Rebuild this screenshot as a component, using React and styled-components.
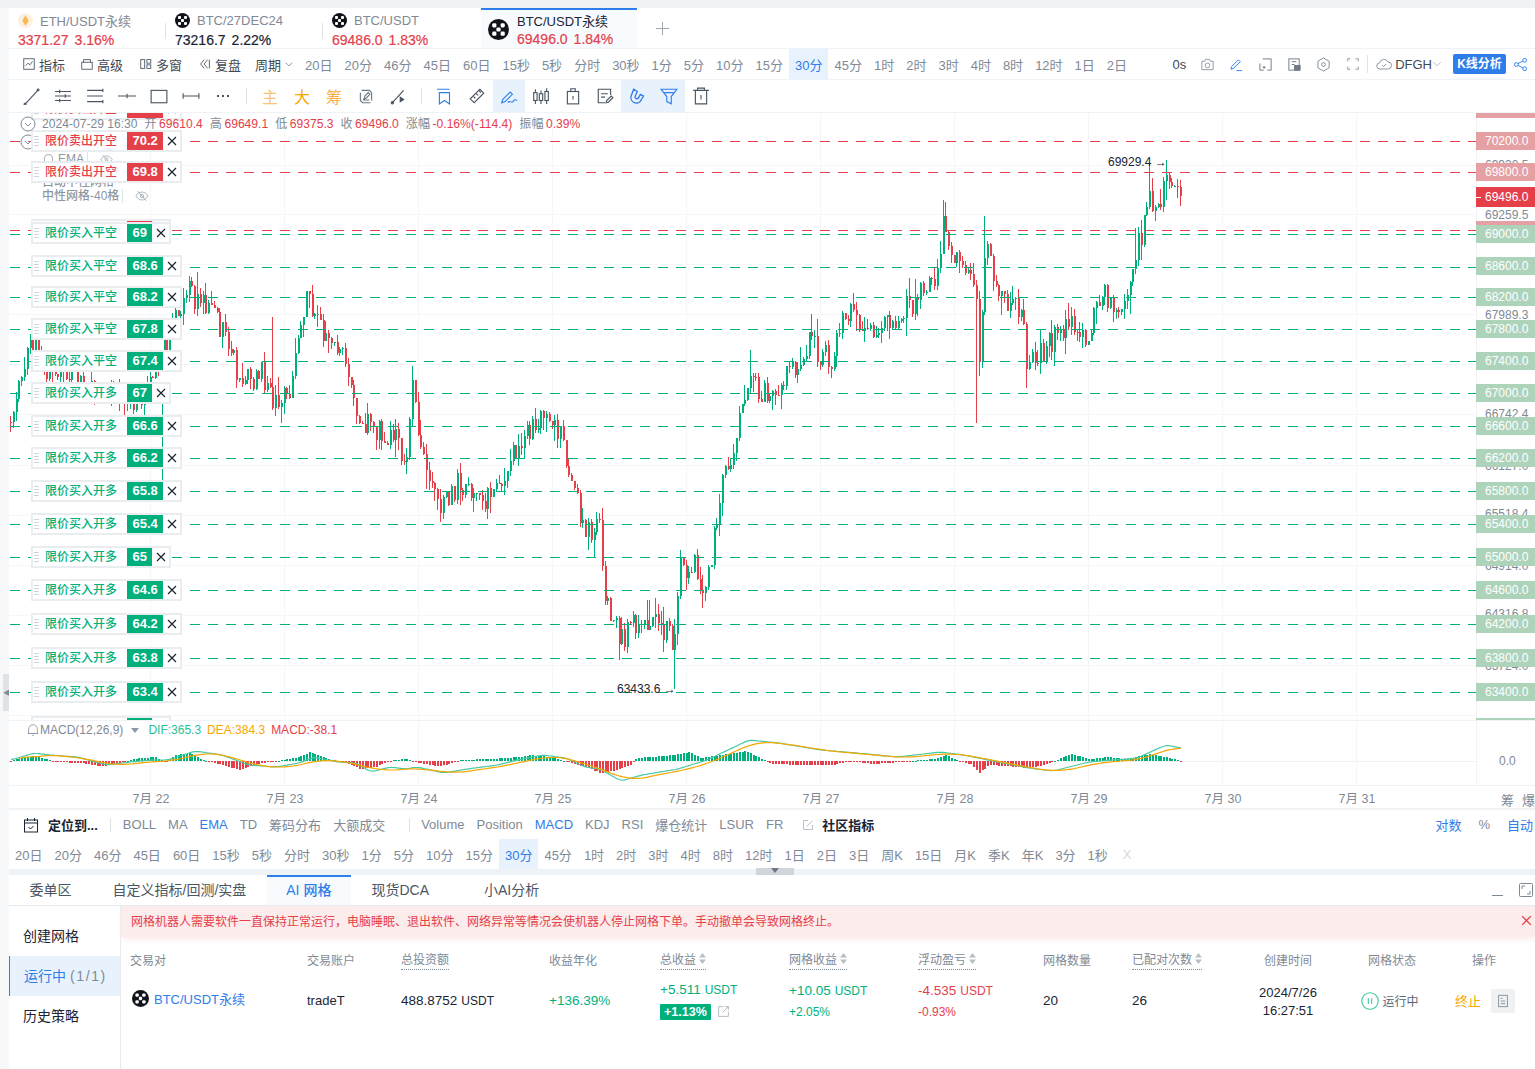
import styled, { createGlobalStyle } from "styled-components";

const GRAY = "#7f8a96";
const DARK = "#1a2433";
const RED = "#e5404a";
const GREEN = "#00b07c";
const BLUE = "#2f7de9";
const ORANGE = "#f7a600";
const LINE = "#eff3f6";

const GlobalStyle = createGlobalStyle`
    html, body { margin: 0; padding: 0; }
    body {
        font-family: "Liberation Sans", "Noto Sans CJK SC", sans-serif;
        font-size: 13px;
        color: ${DARK};
        overflow: hidden;
    }
`;

const Page = styled.div`
    position: relative;
    height: 1069px;
    overflow: hidden;
    padding: 8px 0 0 9px;
    box-sizing: border-box;
    background: linear-gradient(${LINE} 8px, #f6f8fa 8px);
    display: flex;
    flex-direction: column;
`;

const SideHandle = styled.div`
    position: absolute;
    left: 3px;
    top: 674px;
    width: 7px;
    height: 37px;
    background: #dfe3e6;
    color: #7f8a96;
    font-size: 7px;
    line-height: 37px;
`;

/* ---------- top tabs ---------- */
const TabBar = styled.div`
    display: flex;
    height: 40px;
    background: #fff;
    border-bottom: 1px solid ${LINE};
`;

const Tab = styled.div`
    position: relative;
    width: ${p => (p.$active ? "156px" : "157px")};
    margin-left: ${p => (p.$active ? "1px" : "0")};
    box-sizing: border-box;
    padding: ${p => (p.$active ? "3px 0 0 36px" : "5px 0 0 9px")};
    background: ${p => (p.$active ? "#f8fbfe" : "#fff")};
    border-top: ${p => (p.$active ? `2px solid ${BLUE}` : "none")};
    &::after {
        content: "";
        display: ${p => (p.$sep ? "block" : "none")};
        position: absolute;
        right: 0;
        top: 15px;
        height: 16px;
        border-right: 1px solid #dfe3e6;
    }
`;

const TabName = styled.div`
    display: flex;
    align-items: center;
    gap: 7px;
    height: 15px;
    font-size: 13px;
    color: ${p => (p.$active ? DARK : GRAY)};
`;

const TabPrice = styled.div`
    display: flex;
    gap: 6px;
    margin-top: ${p => (p.$active ? 3 : 4)}px;
    font-size: 14px;
    font-weight: 500;
    line-height: 16px;
    -webkit-text-stroke: 0.2px currentColor;
    color: ${p => (p.$tone === "dark" ? DARK : RED)};
`;

const BigCoin = styled.span`
    position: absolute;
    left: 7px;
    top: 9px;
    display: flex;
`;

const AddTab = styled.div`
    margin-left: 18px;
    align-self: center;
    display: flex;
    color: #9aa3ad;
`;

/* ---------- toolbars ---------- */
const Toolbar = styled.div`
    display: flex;
    align-items: center;
    height: 30px;
    background: #fff;
    border-bottom: 1px solid ${LINE};
`;

const Tool = styled.div`
    display: flex;
    align-items: center;
    gap: 3px;
    margin-left: ${p => p.$ml || 0}px;
    margin-right: ${p => p.$mr || 0}px;
    font-size: 13px;
    color: #3f4a57;
`;

const Period = styled.div`
    height: 100%;
    display: flex;
    align-items: center;
    padding: 0 6px;
    font-size: 13px;
    color: ${p => (p.$active ? BLUE : GRAY)};
    background: ${p => (p.$active ? "#e7f2fd" : "transparent")};
`;

const PeriodGroup = styled.div`
    display: flex;
    height: 100%;
    margin-left: ${p => p.$ml || 0}px;
`;

const RightTools = styled.div`
    margin-left: auto;
    display: flex;
    align-items: center;
    height: 100%;
    color: ${GRAY};
`;

const IconSlot = styled.span`
    width: 29px;
    display: flex;
    justify-content: center;
`;

const Divider = styled.span`
    width: 1px;
    height: ${p => p.$h || 16}px;
    margin-left: ${p => p.$ml || 0}px;
    margin-right: ${p => p.$mr || 0}px;
    background: #dfe3e6;
`;

const AnalyzeBtn = styled.div`
    width: 53px;
    height: 20px;
    border-radius: 2px;
    margin-left: 11px;
    background: ${BLUE};
    color: #fff;
    font-size: 12px;
    font-weight: 700;
    line-height: 20px;
    text-align: center;
`;

const DrawBar = styled.div`
    display: flex;
    align-items: center;
    height: 32px;
    padding-left: 6px;
    background: #fff;
    border-bottom: 1px solid ${LINE};
`;

const DrawTool = styled.span`
    width: 32px;
    height: 32px;
    display: flex;
    align-items: center;
    justify-content: center;
    background: ${p => (p.$active ? "#e7f2fd" : "transparent")};
`;

const DrawWord = styled(DrawTool)`
    font-size: 16px;
    color: ${p => p.$color};
`;

/* ---------- chart ---------- */
const MainPane = styled.div`
    position: relative;
    height: 607px;
    overflow: hidden;
    background: #fff;
`;

const MacdPane = styled.div`
    position: relative;
    height: 64px;
    background: #fff;
    border-top: 1px solid ${LINE};
    overflow: hidden;
`;

const CanvasSvg = styled.svg`
    position: absolute;
    left: 0;
    top: 0;
    display: block;
`;

const DateAxis = styled.div`
    position: relative;
    display: flex;
    height: 22px;
    padding-left: 75px;
    align-items: center;
    background: #fff;
    border-top: 1px solid ${LINE};
    border-bottom: 2px solid ${LINE};
`;

const DateCell = styled.div`
    width: 134px;
    text-align: center;
    font-size: 12.5px;
    color: ${GRAY};
`;

const AxisEnd = styled.div`
    position: absolute;
    right: 0;
    top: 4px;
    display: flex;
    gap: 8px;
    font-size: 13px;
    color: ${GRAY};
`;

const Legend = styled.div`
    position: absolute;
    left: 11px;
    top: 3px;
    display: flex;
    align-items: center;
    gap: 7px;
    height: 16px;
    font-size: 12.1px;
    color: ${GRAY};
    white-space: nowrap;
    z-index: 3;
`;

const LegendField = styled.span`
    display: inline-flex;
    align-items: baseline;
    gap: 2.5px;
    height: 16px;
    line-height: 16px;
    margin-left: ${p => p.$ml || 0}px;
`;

const Val = styled.span`
    color: ${RED};
`;

const RowToggle = styled.span`
    position: absolute;
    left: 11px;
    top: ${p => p.$y - 113 - 8}px;
    display: flex;
`;

const IndicatorName = styled.div`
    position: absolute;
    left: ${p => p.$x - 9}px;
    top: ${p => p.$y - 113 - 8}px;
    height: 16px;
    line-height: 16px;
    display: flex;
    align-items: center;
    gap: 3px;
    font-size: 12px;
    font-weight: 500;
    color: #8e98a3;
    white-space: nowrap;
`;

const NameSep = styled.span`
    width: 1px;
    height: 14px;
    margin-right: ${p => p.$mr}px;
    background: #dfe3e6;
`;

const Order = styled.div`
    position: absolute;
    left: 22px;
    top: ${p => p.$y - 113 - 11}px;
    height: 18px;
    display: flex;
    align-items: stretch;
    background: #fff;
    border: 2px solid #e9edef;
    z-index: 2;
`;

const Grip = styled.span`
    width: 11px;
    margin-left: 1px;
    display: flex;
    align-items: center;
`;

const OrderName = styled.span`
    width: 82px;
    font-size: 12px;
    line-height: 18px;
    font-weight: 500;
    color: ${p => (p.$side === "sell" ? RED : GREEN)};
`;

const OrderValue = styled.span`
    padding: 0 5.5px;
    font-size: 13px;
    font-weight: 700;
    line-height: 18px;
    color: #fff;
    background: ${p => (p.$side === "sell" ? RED : GREEN)};
`;

const OrderClose = styled.span`
    width: 17px;
    display: flex;
    align-items: center;
    justify-content: center;
`;

const PriceTag = styled.div`
    position: absolute;
    left: 1467px;
    top: ${p => p.$y - 113 - 9}px;
    width: 59px;
    height: 18px;
    box-sizing: border-box;
    padding-left: 9px;
    font-size: 12px;
    line-height: 18px;
    color: #fff;
    background: ${p => (p.$side === "sell" ? "#e5a0a4" : "#aed3bb")};
    z-index: 2;
`;

const LastPrice = styled(PriceTag)`
    height: 20px;
    line-height: 20px;
    background: ${RED};
    top: ${p => p.$y - 113 - 10}px;
    z-index: 3;
    &::before {
        content: "";
        position: absolute;
        left: 0;
        top: 10px;
        width: 5px;
        height: 1px;
        background: #fff;
    }
`;

const AxisPrice = styled.div`
    position: absolute;
    left: 1476px;
    top: ${p => p.$y - 113 - 7}px;
    font-size: 12px;
    line-height: 14px;
    color: ${GRAY};
`;

const Extreme = styled.div`
    position: absolute;
    left: ${p => p.$x - 9}px;
    top: ${p => p.$y - 113 - 7}px;
    font-size: 12px;
    line-height: 14px;
    color: ${DARK};
    white-space: nowrap;
`;

const MacdLegend = styled.div`
    position: absolute;
    left: 17px;
    top: 1px;
    display: flex;
    align-items: center;
    font-size: 12px;
    line-height: 16px;
    color: ${GRAY};
`;

const MacdValue = styled.span`
    margin-left: ${p => p.$ml || 6}px;
    color: ${p => p.$color};
`;

const MacdCaret = styled.svg`
    margin-left: 8px;
    fill: #8e98a3;
`;

const ZeroLabel = styled.div`
    position: absolute;
    left: 1490px;
    top: 33px;
    font-size: 12px;
    color: ${GRAY};
`;

/* ---------- indicator + period rows ---------- */
const IndicatorRow = styled.div`
    display: flex;
    align-items: center;
    gap: 12px;
    height: 29px;
    padding-left: 14px;
    background: #fff;
    font-size: 13px;
    color: ${GRAY};
    white-space: nowrap;
`;

const Chip = styled.span`
    color: ${p => (p.$on ? BLUE : GRAY)};
`;

const StrongChip = styled.span`
    font-weight: 700;
    color: ${DARK};
    margin-left: ${p => p.$ml || 0}px;
`;

const ExtSlot = styled.span`
    display: flex;
    margin-left: ${p => p.$ml || 0}px;
`;

const RowEnd = styled.div`
    margin-left: auto;
    margin-right: 2px;
    display: flex;
    align-items: center;
    gap: 17px;
`;

const PeriodRow = styled.div`
    display: flex;
    height: 30px;
    background: #fff;
`;

const RowClose = styled.span`
    display: flex;
    align-items: center;
    margin-left: 9px;
    font-size: 13px;
    color: #d3d8dd;
`;

const Gap = styled.div`
    position: relative;
    height: 6px;
    background: ${LINE};
`;

const GapHandle = styled.div`
    position: absolute;
    left: 747px;
    top: -1px;
    width: 38px;
    height: 7px;
    display: flex;
    justify-content: center;
    background: #cfd5da;
`;

/* ---------- bottom panel ---------- */
const Panel = styled.div`
    flex: 1;
    display: flex;
    flex-direction: column;
    background: #fff;
`;

const PanelTabs = styled.div`
    display: flex;
    align-items: stretch;
    height: 30px;
    border-bottom: 1px solid #e6eaed;
`;

const PanelTab = styled.div`
    padding: 0 ${p => (p.$active ? 19.5 : 20.5)}px;
    margin-left: ${p => p.$ml || 0}px;
    font-size: 14px;
    line-height: 26px;
    color: ${p => (p.$active ? BLUE : "#4a5562")};
    background: ${p => (p.$active ? "#f8fbfe" : "transparent")};
    border-top: 2px solid ${p => (p.$active ? BLUE : "transparent")};
    font-weight: ${p => (p.$active ? 500 : 400)};
`;

const WindowTools = styled.div`
    margin-left: auto;
    margin-right: 1px;
    display: flex;
    align-items: center;
    gap: 12px;
`;

const PanelBody = styled.div`
    flex: 1;
    display: flex;
`;

const SideMenu = styled.div`
    width: 111px;
    padding-top: 10px;
    border-right: 1px solid #e6eaed;
`;

const SideItem = styled.div`
    height: 40px;
    line-height: 40px;
    box-sizing: border-box;
    padding-left: ${p => (p.$active ? 15 : 14)}px;
    font-size: 14px;
    color: ${p => (p.$active ? BLUE : DARK)};
    background: ${p => (p.$active ? "#e7f2fd" : "transparent")};
    box-shadow: ${p => (p.$active ? `inset 1px 0 0 ${BLUE}` : "none")};
`;

const SideCount = styled.span`
    color: ${GRAY};
    margin-left: 4px;
    letter-spacing: 1.6px;
`;

const Content = styled.div`
    flex: 1;
    min-width: 0;
`;

const Banner = styled.div`
    display: flex;
    align-items: center;
    justify-content: space-between;
    height: 31px;
    box-sizing: border-box;
    padding: 0 3px 2px 10px;
    font-size: 12px;
    color: ${RED};
    background: #fdecec;
    box-shadow: 0 3px 5px #fdeeee;
`;

const COLS = "177px 94px 148px 111px 129px 129px 125px 89px 108px 96px 112px 72px";

const HeadRow = styled.div`
    display: grid;
    grid-template-columns: ${COLS};
    align-items: center;
    height: 23px;
    margin: 11px 0 0 9px;
    font-size: 12px;
    color: ${GRAY};
`;

const Head = styled.div`
    text-align: ${p => (p.$center ? "center" : "left")};
`;

const HeadText = styled.span`
    display: inline-flex;
    align-items: center;
    gap: 3px;
    padding-bottom: 2px;
    border-bottom: ${p => (p.$dotted ? `1px dotted ${GRAY}` : "none")};
`;

const DataRow = styled.div`
    display: grid;
    grid-template-columns: ${COLS};
    align-items: center;
    height: 59px;
    margin-left: 9px;
    font-size: 13px;
    color: ${DARK};
`;

const PairCell = styled.div`
    display: flex;
    align-items: center;
    gap: 5px;
    margin-left: 2px;
    color: ${BLUE};
    margin-top: -4px;
`;

const Amount = styled.span`
    font-size: 13.5px;
    color: ${p => p.$color || DARK};
`;

const Unit = styled.span`
    font-size: 12px;
    margin-left: 4px;
    color: ${p => p.$color || DARK};
`;

const Stack = styled.div`
    display: flex;
    flex-direction: column;
    gap: 7px;
`;

const SubPct = styled.span`
    font-size: 12px;
    color: ${p => p.$color};
`;

const Badge = styled.span`
    padding: 1px 4px;
    border-radius: 1px;
    font-size: 12.5px;
    line-height: 14px;
    font-weight: 700;
    color: #fff;
    background: ${GREEN};
`;

const BadgeLine = styled.div`
    display: flex;
    align-items: center;
    gap: 6px;
`;

const TimeCell = styled.div`
    text-align: center;
    line-height: 18px;
    margin-top: 2px;
`;

const StatusCell = styled.div`
    display: flex;
    align-items: center;
    justify-content: center;
    gap: 3px;
    padding-right: 4px;
    font-size: 12px;
    color: #5a6673;
`;

const ActionCell = styled.div`
    display: flex;
    align-items: center;
    gap: 10px;
    padding-left: 7px;
`;

const StopWord = styled.span`
    font-size: 13px;
    color: ${ORANGE};
`;

const LogBtn = styled.span`
    width: 24px;
    height: 24px;
    display: flex;
    align-items: center;
    justify-content: center;
    background: #eff1f3;
    border-radius: 2px;
`;

const Svg = styled.svg`
    display: block;
    flex: none;
    fill: none;
    stroke: ${p => p.$c || "#4a5562"};
    stroke-width: ${p => p.$w || 1};
`;

function Ico({ s = 16, c, w, children }) {
    return <Svg viewBox="0 0 16 16" width={s} height={s} $c={c} $w={w}>{children}</Svg>;
}

function OkxCoin({ s = 15 }) {
    return (
        <svg viewBox="0 0 20 20" width={s} height={s}>
            <circle cx="10" cy="10" r="10" fill="#10141a" />
            {[[4, 4], [12, 4], [8, 8], [4, 12], [12, 12]].map(([x, y]) => (
                <rect key={`${x}-${y}`} x={x} y={y} width="4" height="4" rx="1.3" fill="#fff" />
            ))}
        </svg>
    );
}

function EthCoin() {
    return (
        <svg viewBox="0 0 16 16" width="15" height="15">
            <circle cx="8" cy="8" r="8" fill="#fbf1e2" />
            <path d="M8 2.5 11.5 8 8 13.5 4.5 8z" fill="#f7b955" />
        </svg>
    );
}

function Cross({ s = 10, c = DARK }) {
    return (
        <svg viewBox="0 0 10 10" width={s} height={s} fill="none" stroke={c} strokeWidth="1.2">
            <path d="M1 1 9 9M9 1 1 9" />
        </svg>
    );
}

function GripDots() {
    return (
        <svg viewBox="0 0 5 10" width="5" height="10" fill="#cfd5da">
            {[0, 3, 6, 9].map(y => (
                <rect key={y} x="0" y={y} width="5" height="1" />
            ))}
        </svg>
    );
}

function SortIcon() {
    return (
        <svg viewBox="0 0 7 11" width="7" height="11" fill="#b7bec6">
            <path d="M3.5 0 7 4.5H0zM3.5 11 0 6.5h7z" />
        </svg>
    );
}

function ToggleCircle() {
    return (
        <Ico s={16} c="#7f8a96">
            <circle cx="8" cy="8" r="7" />
            <path d="M5 7l3 3 3-3" />
        </Ico>
    );
}

function EyeOff({ s = 14 }) {
    return (
        <Ico s={s} c="#a3acb5">
            <path d="M1 8c2-3.2 4.4-4.5 7-4.5S13 4.8 15 8c-2 3.2-4.4 4.5-7 4.5S3 11.2 1 8z" />
            <circle cx="8" cy="8" r="2" />
            <path d="M3 2.5 13 13.5" />
        </Ico>
    );
}

function Bell({ s = 14, c = "#8e98a3" }) {
    return (
        <Ico s={s} c={c}><path d="M3 12V7a5 5 0 0 1 10 0v5zM2 12h12M7 14h2" /></Ico>
    );
}

/* ---------- chart data ---------- */
const PATH = [
    [10, 422], [16, 400], [24, 360], [32, 345], [45, 372], [60, 378], [75, 375], [90, 392], [110, 392], [125, 400],
    [140, 398], [152, 380], [165, 345], [175, 320], [185, 285], [195, 300], [210, 315], [225, 335], [240, 385],
    [250, 380], [262, 372], [278, 415], [290, 385], [298, 340], [306, 300], [325, 340], [345, 358], [360, 425],
    [380, 428], [398, 440], [406, 470], [412, 385], [425, 478], [440, 510], [458, 482], [475, 505], [495, 488],
    [515, 445], [528, 432], [540, 415], [560, 430], [575, 500], [590, 540], [600, 512], [604, 600], [620, 640],
    [635, 620], [650, 625], [665, 630], [674, 640], [680, 570], [695, 560], [705, 600], [715, 530], [722, 480],
    [735, 455], [745, 380], [770, 395], [790, 372], [808, 340], [830, 362], [845, 312], [870, 332], [895, 322],
    [915, 298], [935, 285], [942, 225], [955, 255], [975, 280], [980, 370], [985, 232], [995, 292], [1020, 312],
    [1027, 368], [1045, 350], [1065, 322], [1085, 342], [1100, 295], [1125, 312], [1135, 250], [1143, 235],
    [1147, 190], [1152, 205], [1160, 195], [1167, 170], [1174, 190], [1181, 195],
];

const SPIKES = [
    [977, 423], [984, 216], [942, 200], [675, 689], [1150, 162], [1167, 160], [305, 293], [197, 272], [273, 317],
    [411, 366], [440, 522], [505, 470], [563, 420], [618, 660], [648, 600], [750, 350], [811, 314], [1027, 388],
    [1136, 228], [1180, 206], [588, 550], [702, 608],
];

const HIST = [
    [10, 0], [20, 3], [35, 5], [45, 2], [55, -1], [80, -2], [100, -5], [110, -4], [125, 0], [140, 3], [155, 4],
    [165, -1], [175, 6], [190, 8], [200, 2], [210, -1], [240, -9], [255, -3], [270, -1], [295, 3], [310, 9],
    [325, 3], [345, -2], [360, -8], [375, -6], [385, -1], [395, 1], [405, 2], [415, -1], [435, -5], [445, -4],
    [460, 1], [490, 2], [520, 4], [530, 6], [550, 4], [570, -2], [585, -6], [600, -12], [612, -10], [630, -4],
    [636, 3], [665, 5], [689, 9], [701, 3], [713, 5], [746, 10], [764, 1], [770, -3], [803, -4], [832, -4],
    [845, -1], [856, -1], [874, -3], [898, -1], [910, 0], [934, 2], [946, 6], [958, 0], [970, -3], [979, -12],
    [988, -4], [1005, -5], [1029, -7], [1047, -3], [1056, 1], [1071, 7], [1089, 2], [1107, 4], [1125, 2],
    [1149, 7], [1164, 4], [1178, 1], [1181, -1],
];

const DIF = [
    [11, 760], [34, 753], [50, 755], [77, 757], [107, 765], [130, 762], [153, 760], [168, 760], [195, 751],
    [222, 755], [249, 765], [276, 767], [299, 763], [314, 757], [337, 762], [356, 763], [371, 772], [390, 767],
    [406, 769], [417, 767], [444, 773], [467, 769], [498, 765], [517, 760], [543, 755], [566, 758], [585, 767],
    [600, 769], [621, 781], [642, 775], [678, 769], [707, 760], [749, 740], [779, 743], [821, 750], [856, 753],
    [898, 757], [940, 752], [964, 755], [988, 760], [1029, 768], [1053, 771], [1089, 762], [1137, 758],
    [1166, 745], [1181, 748],
];

const interp = (pts, x) => {
    if (x <= pts[0][0]) return pts[0][1];
    for (let i = 1; i < pts.length; i++) {
        if (x <= pts[i][0]) {
            const [x0, y0] = pts[i - 1];
            const [x1, y1] = pts[i];
            return y0 + ((y1 - y0) * (x - x0)) / (x1 - x0);
        }
    }
    return pts[pts.length - 1][1];
};

const mulberry = seed => () => {
    seed = (seed + 0x6d2b79f5) | 0;
    let t = Math.imul(seed ^ (seed >>> 15), 1 | seed);
    t = (t + Math.imul(t ^ (t >>> 7), 61 | t)) ^ t;
    return ((t ^ (t >>> 14)) >>> 0) / 4294967296;
};

const STEP = 2.792;
const COUNT = Math.floor((1181 - 10) / STEP) + 1;

const buildCandles = () => {
    const rnd = mulberry(11);
    const list = [];
    let prev = interp(PATH, 10);
    for (let i = 0; i < COUNT; i++) {
        const x = Math.round(10 + i * STEP);
        const close = interp(PATH, x) + (rnd() - 0.5) * 26;
        let hi = Math.min(prev, close) - rnd() * rnd() * 20;
        let lo = Math.max(prev, close) + rnd() * rnd() * 20;
        SPIKES.forEach(([sx, sy]) => {
            if (Math.abs(sx - x) <= STEP / 2) {
                if (sy < hi) hi = sy;
                if (sy > lo) lo = sy;
            }
        });
        list.push({ x, open: prev, close, hi, lo, up: close < prev });
        prev = close;
    }
    return list;
};

const CANDLES = buildCandles();

const ORDERS = [
    { y: 109, name: "限价卖出开空", value: "70.6", side: "sell" },
    { y: 141, name: "限价卖出开空", value: "70.2", side: "sell" },
    { y: 172, name: "限价卖出开空", value: "69.8", side: "sell" },
    { y: 230, name: "限价卖出开空", value: "69", side: "sell" },
    { y: 233, name: "限价买入平空", value: "69", side: "buy" },
    { y: 266, name: "限价买入平空", value: "68.6", side: "buy" },
    { y: 297, name: "限价买入平空", value: "68.2", side: "buy" },
    { y: 329, name: "限价买入平空", value: "67.8", side: "buy" },
    { y: 361, name: "限价买入平空", value: "67.4", side: "buy" },
    { y: 393, name: "限价买入开多", value: "67", side: "buy" },
    { y: 426, name: "限价买入开多", value: "66.6", side: "buy" },
    { y: 458, name: "限价买入开多", value: "66.2", side: "buy" },
    { y: 491, name: "限价买入开多", value: "65.8", side: "buy" },
    { y: 524, name: "限价买入开多", value: "65.4", side: "buy" },
    { y: 557, name: "限价买入开多", value: "65", side: "buy" },
    { y: 590, name: "限价买入开多", value: "64.6", side: "buy" },
    { y: 624, name: "限价买入开多", value: "64.2", side: "buy" },
    { y: 658, name: "限价买入开多", value: "63.8", side: "buy" },
    { y: 692, name: "限价买入开多", value: "63.4", side: "buy" },
    { y: 727, name: "限价买入开多", value: "63", side: "buy" },
];

const PRICE_TAGS = [
    [109, "70600.0", "sell"], [141, "70200.0", "sell"], [172, "69800.0", "sell"], [230, "69400.0", "sell"],
    [234, "69000.0", "buy"], [266, "68600.0", "buy"], [297, "68200.0", "buy"], [329, "67800.0", "buy"],
    [361, "67400.0", "buy"], [393, "67000.0", "buy"], [426, "66600.0", "buy"], [458, "66200.0", "buy"],
    [491, "65800.0", "buy"], [524, "65400.0", "buy"], [557, "65000.0", "buy"], [590, "64600.0", "buy"],
    [624, "64200.0", "buy"], [658, "63800.0", "buy"], [692, "63400.0", "buy"], [727, "63000.0", "buy"],
];

const AXIS_PRICES = [
    [165, "69930.5"], [214.5, "69259.5"], [315, "67989.3"], [414, "66742.4"], [466, "66127.0"],
    [514, "65518.4"], [566, "64914.0"], [614, "64316.8"], [666, "63724.0"],
];

const LINES = [
    [141, RED], [172, RED], [230, RED], [234, GREEN], [267, GREEN], [297, GREEN], [329, GREEN],
    [361, GREEN], [393, GREEN], [426, GREEN], [458, GREEN], [491, GREEN], [524, GREEN],
    [557, GREEN], [590, GREEN], [624, GREEN], [658, GREEN], [692, GREEN],
];

const GRID_X = Array.from({ length: 10 }, (_, i) => 150 + i * 134);
const GRID_Y = [165, 214, 264, 314, 364, 414, 465, 515, 565, 615, 665, 715];

const PERIODS_TOP = [
    "20日", "20分", "46分", "45日", "60日", "15秒", "5秒", "分时", "30秒", "1分", "5分", "10分", "15分", "30分",
    "45分", "1时", "2时", "3时", "4时", "8时", "12时", "1日", "2日",
];
const PERIODS_LOW = [
    ...PERIODS_TOP, "3日", "周K", "15日", "月K", "季K", "年K", "3分", "1秒",
];

const sampleLine = pts => {
    const out = [];
    for (let x = pts[0][0]; x <= pts[pts.length - 1][0]; x += 2) out.push([x, interp(pts, x)]);
    return out;
};

const smooth = (pts, r) =>
    pts.map(([x], i) => {
        const part = pts.slice(Math.max(0, i - r), Math.min(pts.length, i + r + 1));
        return [x, part.reduce((a, p) => a + p[1], 0) / part.length];
    });

const toPoints = pts => pts.map(([x, y]) => `${x},${y.toFixed(1)}`).join(" ");

const DIF_LINE = smooth(sampleLine(DIF), 2);
const DEA_LINE = smooth(sampleLine(DIF), 9)
    .map(([x, y]) => [x + 8, y + 1])
    .filter(([x]) => x <= 1181);

function MainChart() {
    return (
        <CanvasSvg width="1526" height="607" viewBox="9 113 1526 607">
            {GRID_X.map(x => (
                <line key={x} x1={x + 0.5} x2={x + 0.5} y1="113" y2="720" stroke="#f4f6f8" />
            ))}
            {GRID_Y.map(y => (
                <line key={y} x1="9" x2="1476" y1={y + 0.5} y2={y + 0.5} stroke="#f4f6f8" />
            ))}
            <line x1="1476.5" x2="1476.5" y1="113" y2="720" stroke="#f0f2f4" />
            <g shapeRendering="crispEdges">
                {CANDLES.map(c => {
                    const top = Math.min(c.open, c.close);
                    return (
                        <g key={c.x} fill={c.up ? GREEN : RED}>
                            <rect x={c.x} y={c.hi} width="1" height={c.lo - c.hi} />
                            <rect x={c.x} y={top} width="2" height={Math.max(1, Math.abs(c.open - c.close))} />
                        </g>
                    );
                })}
                <line x1="162.5" x2="162.5" y1="400" y2="500" stroke={GREEN} />
            </g>
            {LINES.map(([y, color]) => (
                <line
                    key={y}
                    x1="10"
                    x2="1476"
                    y1={y + 0.5}
                    y2={y + 0.5}
                    stroke={color}
                    strokeWidth="1"
                    strokeDasharray="10 8"
                />
            ))}
        </CanvasSvg>
    );
}

function MacdChart() {
    return (
        <CanvasSvg width="1526" height="64" viewBox="9 721 1526 64">
            {GRID_X.map(x => (
                <line key={x} x1={x + 0.5} x2={x + 0.5} y1="721" y2="785" stroke="#f4f6f8" />
            ))}
            <line x1="9" x2="1476" y1="761.5" y2="761.5" stroke="#f0f2f4" />
            <line x1="1476.5" x2="1476.5" y1="721" y2="785" stroke="#f0f2f4" />
            <g shapeRendering="crispEdges">
                {CANDLES.map(c => {
                    const h = interp(HIST, c.x);
                    return (
                        <rect
                            key={c.x}
                            x={c.x}
                            y={h > 0 ? 761 - h : 761}
                            width="2"
                            height={Math.max(1, Math.abs(h))}
                            fill={h > 0 ? GREEN : RED}
                        />
                    );
                })}
            </g>
            <polyline points={toPoints(DIF_LINE)} fill="none" stroke="#44c9a5" strokeWidth="1.2" />
            <polyline points={toPoints(DEA_LINE)} fill="none" stroke={ORANGE} strokeWidth="1.2" />
        </CanvasSvg>
    );
}

export default function App() {
    return (
        <Page>
            <GlobalStyle />
            <SideHandle>◀</SideHandle>

            <TabBar>
                <Tab $sep>
                    <TabName><EthCoin />ETH/USDT永续</TabName>
                    <TabPrice><span>3371.27</span><span>3.16%</span></TabPrice>
                </Tab>
                <Tab $sep>
                    <TabName><OkxCoin />BTC/27DEC24</TabName>
                    <TabPrice $tone="dark"><span>73216.7</span><span>2.22%</span></TabPrice>
                </Tab>
                <Tab>
                    <TabName><OkxCoin />BTC/USDT</TabName>
                    <TabPrice><span>69486.0</span><span>1.83%</span></TabPrice>
                </Tab>
                <Tab $active>
                    <BigCoin><OkxCoin s={21} /></BigCoin>
                    <TabName $active>BTC/USDT永续</TabName>
                    <TabPrice $active><span>69496.0</span><span>1.84%</span></TabPrice>
                </Tab>
                <AddTab>
                    <Ico s={15} c="#9aa3ad"><path d="M8 1v14M1 8h14" /></Ico>
                </AddTab>
            </TabBar>

            <Toolbar>
                <Tool $ml={13}>
                    <Ico s={14}><rect x="2" y="2" width="12" height="12" /><path d="M4 10l3-3 2 2 3-4" /></Ico>
                    指标
                </Tool>
                <Tool $ml={15}>
                    <Ico s={14}><rect x="2" y="6" width="12" height="8" /><path d="M4 6V3h8v3" /></Ico>
                    高级
                </Tool>
                <Tool $ml={16}>
                    <Ico s={14}><rect x="2" y="3" width="4.5" height="10" /><rect x="9" y="3" width="4.5" height="4" /><rect x="9" y="9" width="4.5" height="4" /></Ico>
                    多窗
                </Tool>
                <Tool $ml={16}>
                    <Ico s={14}><path d="M7 3 3 8l4 5M11 3 7 8l4 5M13 3v10" /></Ico>
                    复盘
                </Tool>
                <Tool $ml={14}>
                    周期
                    <Ico s={10}><path d="M3 6l5 5 5-5" /></Ico>
                </Tool>
                <PeriodGroup $ml={5}>
                    {PERIODS_TOP.map(p => (
                        <Period key={p} $active={p === "30分"}>{p}</Period>
                    ))}
                </PeriodGroup>
                <RightTools>
                    <Tool $mr={7}>0s</Tool>
                    <IconSlot>
                        <Ico s={15} c="#8e98a3"><path d="M2 4.5h3l1-2h4l1 2h3v9H2z" /><circle cx="8" cy="9" r="2.5" /></Ico>
                    </IconSlot>
                    <IconSlot>
                        <Ico s={15} c={BLUE}><path d="M2 13l1-3 7-7 2 2-7 7zM8 14.5h6" /></Ico>
                    </IconSlot>
                    <IconSlot>
                        <Ico s={15} c="#6d7884"><path d="M5 2h9v12h-4M2 7v7h4M5 11h3M6.5 9.5v3" /></Ico>
                    </IconSlot>
                    <IconSlot>
                        <Ico s={15} c="#6d7884"><rect x="2" y="2" width="11" height="12" /><path d="M5 5h5M5 8h3" /><rect x="8" y="9" width="6" height="5" fill="#6d7884" /></Ico>
                    </IconSlot>
                    <IconSlot>
                        <Ico s={15} c="#7f8a96"><path d="M8 1l6 3.5v7L8 15l-6-3.5v-7z" /><circle cx="8" cy="8" r="2" /></Ico>
                    </IconSlot>
                    <IconSlot>
                        <Ico s={14} c="#7f8a96"><path d="M2 5V2h3M11 2h3v3M14 11v3h-3M5 14H2v-3" /></Ico>
                    </IconSlot>
                    <Divider $h={18} $mr={8} />
                    <Ico s={16} c="#8e98a3"><path d="M4 13a3 3 0 0 1-.5-6A4.5 4.5 0 0 1 12 6a3.5 3.5 0 0 1 0 7z" /><path d="M6 9l1.5 1.5L10 8" /></Ico>
                    <Tool $ml={3}>DFGH</Tool>
                    <Ico s={10} c="#8e98a3"><path d="M2 5l6 6 6-6" /></Ico>
                    <AnalyzeBtn>K线分析</AnalyzeBtn>
                    <IconSlot>
                        <Ico s={15} c={BLUE}><circle cx="12.5" cy="3.5" r="2" /><circle cx="3.5" cy="8" r="2" /><circle cx="12.5" cy="12.5" r="2" /><path d="M5.3 7l5.4-2.7M5.3 9l5.4 2.7" /></Ico>
                    </IconSlot>
                </RightTools>
            </Toolbar>

            <DrawBar>
                <DrawTool><Ico s={18}><path d="M3 15 14 3" /><circle cx="14.3" cy="2.7" r=".8" /><circle cx="2.7" cy="15.3" r=".8" /></Ico></DrawTool>
                <DrawTool><Ico s={18}><path d="M1 4h14M1 8h14M1 12h14M5 2.5v3M10 6.5v3M5 10.5v3" /></Ico></DrawTool>
                <DrawTool><Ico s={18}><path d="M1 3h14M1 8h14M1 13h14M15 1.5v3M15 11.5v3" /></Ico></DrawTool>
                <DrawTool><Ico s={18}><path d="M0 8h16M8 6v4" /></Ico></DrawTool>
                <DrawTool><Ico s={18}><rect x="1" y="3" width="14" height="11" /></Ico></DrawTool>
                <DrawTool><Ico s={18}><path d="M1 8h14M1 5.5v5M15 5.5v5" /></Ico></DrawTool>
                <DrawTool><Ico s={16} w={2}><path d="M2 8h2M7 8h2M12 8h2" /></Ico></DrawTool>
                <Divider $h={16} $ml={7} $mr={7} />
                <DrawWord $color="#f7c576">主</DrawWord>
                <DrawWord $color={ORANGE}>大</DrawWord>
                <DrawWord $color="#f9b04a">筹</DrawWord>
                <DrawTool><Ico s={18} c="#6d7884"><path d="M4 3h7l2 2v7M12 14H5l-2-2V5" /><path d="M6 11l1-3 3-3 1.5 1.5-3 3zM6 11.5h5" /></Ico></DrawTool>
                <DrawTool><Ico s={18} c="#4a5562"><path d="M2 15 13 3" /><circle cx="3" cy="14" r="1" /><path d="M10 9l3 2-3 2z" fill="#4a5562" /></Ico></DrawTool>
                <Divider $h={16} $ml={7} $mr={7} />
                <DrawTool><Ico s={18} c={BLUE}><path d="M1 2h11M3 5v10l4.5-3 4.5 3V5z" /></Ico></DrawTool>
                <DrawTool><Ico s={18} c="#4a5562"><path d="M10.5 2 14 5.5 5.5 14 2 10.5zM5 8.5l1.5 1.5M7.5 6 9 7.5M10 3.5 11.5 5" /></Ico></DrawTool>
                <DrawTool $active><Ico s={18} c={BLUE}><path d="M1.5 14l1-3L9 4.5 11 6.5 4.5 13zM7 14c2-3 3 1 4.5-1s2-2 3.5-1" /></Ico></DrawTool>
                <DrawTool><Ico s={18} c="#4a5562"><rect x="1.5" y="5" width="3" height="7" /><rect x="6.5" y="6" width="3" height="6" /><rect x="11.5" y="4" width="3" height="8" /><path d="M3 2v3M3 12v3M8 3v3M8 12v3M13 1v3M13 12v3" /></Ico></DrawTool>
                <DrawTool><Ico s={18} c="#4a5562"><rect x="3" y="4" width="10" height="11" /><path d="M6 4V1.5h4V4M8 8v3" /></Ico></DrawTool>
                <DrawTool><Ico s={18} c="#4a5562"><path d="M13 7V2H2v12h6M4.5 6h6M4.5 9H8" /><path d="M9 14l.5-2 4-4 1.5 1.5-4 4z" /></Ico></DrawTool>
                <DrawTool $active><Ico s={18} c={BLUE} w={1.2}><path d="M5 2 2.8 8a4.8 4.8 0 0 0 9 3.3l2-3.3-2.8-1.5-1.7 3.3a1.7 1.7 0 0 1-3-1.3L8.2 4z" /></Ico></DrawTool>
                <DrawTool $active><Ico s={18} c={BLUE}><path d="M1 2h14L10 8.5V15l-4-2V8.5zM4 5h8" /></Ico></DrawTool>
                <DrawTool><Ico s={18} c="#4a5562"><path d="M1 3h14M5 3V1h6v2M3 3v12h10V3M8 7v4" /></Ico></DrawTool>
            </DrawBar>

            <MainPane>
                <MainChart />
                <Legend>
                    <ToggleCircle />
                    <LegendField $ml={-1}>2024-07-29 16:30</LegendField>
                    <LegendField>开<Val>69610.4</Val></LegendField>
                    <LegendField>高<Val>69649.1</Val></LegendField>
                    <LegendField>低<Val>69375.3</Val></LegendField>
                    <LegendField>收<Val>69496.0</Val></LegendField>
                    <LegendField>涨幅<Val>-0.16%(-114.4)</Val></LegendField>
                    <LegendField>振幅<Val>0.39%</Val></LegendField>
                </Legend>
                <RowToggle $y={142}><ToggleCircle /></RowToggle>
                <IndicatorName $x={42} $y={159}>
                    <Bell s={13} />EMA<NameSep $mr={9} /><EyeOff s={13} />
                </IndicatorName>
                <IndicatorName $x={42} $y={182}>自动中性网格</IndicatorName>
                <IndicatorName $x={42} $y={196}>
                    中性网格-40格<NameSep $mr={9} /><EyeOff />
                </IndicatorName>

                {ORDERS.map(o => (
                    <Order key={o.y} $y={o.y}>
                        <Grip><GripDots /></Grip>
                        <OrderName $side={o.side}>{o.name}</OrderName>
                        <OrderValue $side={o.side}>{o.value}</OrderValue>
                        <OrderClose><Cross /></OrderClose>
                    </Order>
                ))}

                {AXIS_PRICES.map(([y, text]) => (
                    <AxisPrice key={y} $y={y}>{text}</AxisPrice>
                ))}
                {PRICE_TAGS.map(([y, text, side]) => (
                    <PriceTag key={y} $y={y} $side={side}>{text}</PriceTag>
                ))}
                <LastPrice $y={197}>69496.0</LastPrice>
                <Extreme $x={1108} $y={162}>69929.4 →</Extreme>
                <Extreme $x={617} $y={689}>63433.6 →</Extreme>
            </MainPane>

            <MacdPane>
                <MacdChart />
                <MacdLegend>
                    <Bell />
                    MACD(12,26,9)
                    <MacdCaret viewBox="0 0 8 5" width="8" height="5"><path d="M0 0h8L4 5z" /></MacdCaret>
                    <MacdValue $ml={9} $color="#2cbf94">DIF:365.3</MacdValue>
                    <MacdValue $ml={6} $color={ORANGE}>DEA:384.3</MacdValue>
                    <MacdValue $ml={6} $color={RED}>MACD:-38.1</MacdValue>
                </MacdLegend>
                <ZeroLabel>0.0</ZeroLabel>
            </MacdPane>

            <DateAxis>
                {GRID_X.map((x, i) => (
                    <DateCell key={x}>7月 {22 + i}</DateCell>
                ))}
                <AxisEnd><span>筹</span><span>爆</span></AxisEnd>
            </DateAxis>

            <IndicatorRow>
                <Ico s={16} c={DARK}><rect x="1.5" y="3" width="13" height="12" /><path d="M4.5 1v3M11.5 1v3M1.5 6h13M5.5 10l2 2 3-3" /></Ico>
                <StrongChip $ml={-3}>定位到...</StrongChip>
                <Divider $h={14} />
                <Chip>BOLL</Chip>
                <Chip>MA</Chip>
                <Chip $on>EMA</Chip>
                <Chip>TD</Chip>
                <Chip>筹码分布</Chip>
                <Chip>大额成交</Chip>
                <Divider $h={14} $ml={12} $mr={-1} />
                <Chip>Volume</Chip>
                <Chip>Position</Chip>
                <Chip $on>MACD</Chip>
                <Chip>KDJ</Chip>
                <Chip>RSI</Chip>
                <Chip>爆仓统计</Chip>
                <Chip>LSUR</Chip>
                <Chip>FR</Chip>
                <ExtSlot $ml={7}>
                    <Ico s={12} c="#a3acb5"><path d="M14 8v6H2V2h6M6 10l8-8" /></Ico>
                </ExtSlot>
                <StrongChip $ml={-4}>社区指标</StrongChip>
                <RowEnd>
                    <Chip $on>对数</Chip>
                    <Chip>%</Chip>
                    <Chip $on>自动</Chip>
                </RowEnd>
            </IndicatorRow>

            <PeriodRow>
                {PERIODS_LOW.map(p => (
                    <Period key={p} $active={p === "30分"}>{p}</Period>
                ))}
                <RowClose>X</RowClose>
            </PeriodRow>

            <Gap>
                <GapHandle>
                    <svg viewBox="0 0 8 5" width="8" height="5" fill="#6d7884"><path d="M0 0h8L4 5z" /></svg>
                </GapHandle>
            </Gap>

            <Panel>
                <PanelTabs>
                    <PanelTab>委单区</PanelTab>
                    <PanelTab>自定义指标/回测/实盘</PanelTab>
                    <PanelTab $active>AI 网格</PanelTab>
                    <PanelTab>现货DCA</PanelTab>
                    <PanelTab $ml={14}>小AI分析</PanelTab>
                    <WindowTools>
                        <Ico s={16} c="#7f8a96"><path d="M2 13.5h11" /></Ico>
                        <Ico s={16} c="#7f8a96"><rect x="1.5" y="1.5" width="13" height="13" rx="1" /><path d="M4 7V4h3M12 9v3H9" /></Ico>
                    </WindowTools>
                </PanelTabs>
                <PanelBody>
                    <SideMenu>
                        <SideItem>创建网格</SideItem>
                        <SideItem $active>运行中<SideCount>(1/1)</SideCount></SideItem>
                        <SideItem>历史策略</SideItem>
                    </SideMenu>
                    <Content>
                        <Banner>
                            {"网格机器人需要软件一直保持正常运行\uFF0C电脑睡眠、退出软件、网络异常等情况会使机器人停止网格下单。手动撤单会导致网格终止。"}
                            <Cross s={11} c={RED} />
                        </Banner>
                        <HeadRow>
                            <Head>交易对</Head>
                            <Head>交易账户</Head>
                            <Head><HeadText $dotted>总投资额</HeadText></Head>
                            <Head>收益年化</Head>
                            <Head><HeadText $dotted>总收益<SortIcon /></HeadText></Head>
                            <Head><HeadText $dotted>网格收益<SortIcon /></HeadText></Head>
                            <Head><HeadText $dotted>浮动盈亏<SortIcon /></HeadText></Head>
                            <Head>网格数量</Head>
                            <Head><HeadText $dotted>已配对次数<SortIcon /></HeadText></Head>
                            <Head $center>创建时间</Head>
                            <Head $center>网格状态</Head>
                            <Head $center>操作</Head>
                        </HeadRow>
                        <DataRow>
                            <PairCell><OkxCoin s={17} />BTC/USDT永续</PairCell>
                            <div>tradeT</div>
                            <div><Amount>488.8752</Amount><Unit>USDT</Unit></div>
                            <Amount $color={GREEN}>+136.39%</Amount>
                            <Stack>
                                <div><Amount $color={GREEN}>+5.511</Amount><Unit $color={GREEN}>USDT</Unit></div>
                                <BadgeLine>
                                    <Badge>+1.13%</Badge>
                                    <Ico s={13} c="#a3acb5"><path d="M14 8v6H2V2h6M7 9l7-7M10 2h4v4" /></Ico>
                                </BadgeLine>
                            </Stack>
                            <Stack>
                                <div><Amount $color={GREEN}>+10.05</Amount><Unit $color={GREEN}>USDT</Unit></div>
                                <SubPct $color={GREEN}>+2.05%</SubPct>
                            </Stack>
                            <Stack>
                                <div><Amount $color={RED}>-4.535</Amount><Unit $color={RED}>USDT</Unit></div>
                                <SubPct $color={RED}>-0.93%</SubPct>
                            </Stack>
                            <Amount>20</Amount>
                            <Amount>26</Amount>
                            <TimeCell>2024/7/26<br />16:27:51</TimeCell>
                            <StatusCell>
                                <Ico s={18} c="#3cc8a0"><circle cx="8" cy="8" r="7.3" /><path d="M6.5 5.5v5M9.5 5.5v5" /></Ico>
                                运行中
                            </StatusCell>
                            <ActionCell>
                                <StopWord>终止</StopWord>
                                <LogBtn>
                                    <Ico s={14} c="#7f8a96"><rect x="3" y="1.5" width="10" height="13" /><path d="M5.5 5h2M5.5 8h5M5.5 11h5" /></Ico>
                                </LogBtn>
                            </ActionCell>
                        </DataRow>
                    </Content>
                </PanelBody>
            </Panel>
        </Page>
    );
}
